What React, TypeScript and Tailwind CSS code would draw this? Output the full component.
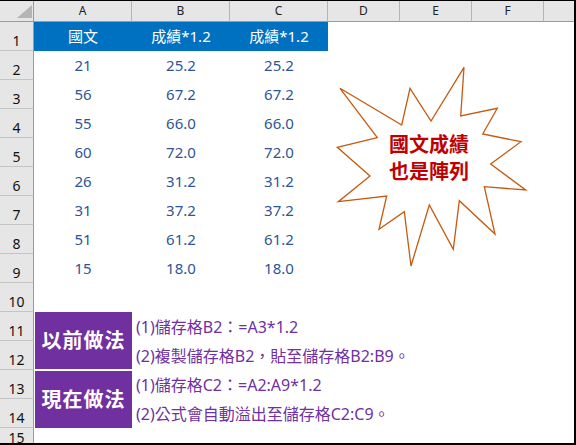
import React from "react";

const FONT = { fontFamily: '"Noto Sans", "Noto Sans CJK TC", sans-serif' };

const data = [
  ["21", "25.2", "25.2"],
  ["56", "67.2", "67.2"],
  ["55", "66.0", "66.0"],
  ["60", "72.0", "72.0"],
  ["26", "31.2", "31.2"],
  ["31", "37.2", "37.2"],
  ["51", "61.2", "61.2"],
  ["15", "18.0", "18.0"],
];

function RowNum({ n }: { n: number | string }) {
  return (
    <div className="flex items-end justify-center bg-[#e6e6e6] border-r border-b border-r-[#9b9b9b] border-b-[#c4c4c4] text-[14px] leading-[19px] text-[#111]">
      {n}
    </div>
  );
}

function ColHead({ l, last }: { l: string; last?: boolean }) {
  return (
    <div
      className={
        last
          ? "flex items-center justify-center bg-[#e6e6e6] border-b border-b-[#9b9b9b] text-[12px] text-[#222]"
          : "flex items-center justify-center bg-[#e6e6e6] border-b border-r border-b-[#9b9b9b] border-r-[#b4b4b4] text-[12px] text-[#222]"
      }
    >
      {l}
    </div>
  );
}

const starPts: [number, number][] = [
  [340, 88.3],
  [401.7, 125],
  [410, 88.3],
  [431, 121],
  [464, 67.3],
  [460.7, 116],
  [497.3, 108.3],
  [482.7, 134],
  [521, 141.7],
  [490.7, 164],
  [525.7, 190],
  [484.3, 186.7],
  [495, 234],
  [459.3, 200.7],
  [453.3, 249.3],
  [429.3, 205],
  [411, 266],
  [404.3, 211.7],
  [379, 229.3],
  [386.7, 196],
  [338.3, 201.7],
  [370, 176],
  [337.3, 147.3],
  [377.3, 137.7],
];

export default function App() {
  const pts = starPts.map(([x, y]) => `${x},${y - 1}`).join(" ");
  return (
    <div
      className="relative w-[576px] h-[445px] overflow-hidden bg-white border-t border-r-2 border-b-2 border-black box-border"
      style={FONT}
    >
      <div className="grid h-full grid-cols-[34px_98px_98px_98px_72px_72px_72px_1fr] grid-rows-[21px_repeat(14,29px)_1fr]">
        {/* header row */}
        <div className="relative bg-[#e6e6e6] border-r border-b border-r-[#9b9b9b] border-b-[#9b9b9b]">
          <svg className="absolute left-0 top-0" width="34" height="21">
            <polygon points="17,17 32,17 32,4" fill="#b4b4b4" />
          </svg>
        </div>
        <ColHead l="A" />
        <ColHead l="B" />
        <ColHead l="C" />
        <ColHead l="D" />
        <ColHead l="E" />
        <ColHead l="F" />
        <ColHead l="" last />

        {/* row 1 */}
        <RowNum n={1} />
        <div className="flex items-center justify-center bg-[#0070c0] text-white text-[15px]">國文</div>
        <div className="flex items-center justify-center bg-[#0070c0] text-white text-[15px]">成績*1.2</div>
        <div className="flex items-center justify-center bg-[#0070c0] text-white text-[15px]">成績*1.2</div>
        <div />
        <div />
        <div />
        <div />

        {data.map((r, i) => (
          <React.Fragment key={i}>
            <RowNum n={i + 2} />
            {r.map((v, j) => (
              <div key={j} className="flex items-center justify-center text-[15px] text-[#2f5597]">
                {v}
              </div>
            ))}
            <div />
            <div />
            <div />
            <div />
          </React.Fragment>
        ))}

        {/* row 10 */}
        <RowNum n={10} />
        <div className="col-span-7" />

        {/* row 11 */}
        <RowNum n={11} />
        <div className="row-span-2 flex items-center justify-center bg-[#7030a0] text-white text-[20px] font-bold tracking-[1px] ml-[1px] border-b border-white">
          以前做法
        </div>
        <div className="col-start-3 col-span-6 flex items-center whitespace-nowrap pl-[4px] text-[16px] text-[#7030a0]">
          (1)儲存格B2：=A3*1.2
        </div>

        {/* row 12 */}
        <RowNum n={12} />
        <div className="col-start-3 col-span-6 flex items-center whitespace-nowrap pl-[4px] text-[16px] text-[#7030a0]">
          (2)複製儲存格B2，貼至儲存格B2:B9。
        </div>

        {/* row 13 */}
        <RowNum n={13} />
        <div className="row-span-2 flex items-center justify-center bg-[#7030a0] text-white text-[20px] font-bold tracking-[1px] ml-[1px] border-t border-white">
          現在做法
        </div>
        <div className="col-start-3 col-span-6 flex items-center whitespace-nowrap pl-[4px] text-[16px] text-[#7030a0]">
          (1)儲存格C2：=A2:A9*1.2
        </div>

        {/* row 14 */}
        <RowNum n={14} />
        <div className="col-start-3 col-span-6 flex items-center whitespace-nowrap pl-[4px] text-[16px] text-[#7030a0]">
          (2)公式會自動溢出至儲存格C2:C9。
        </div>

        {/* row 15 */}
        <RowNum n={15} />
        <div className="col-span-7" />
      </div>

      {/* explosion shape */}
      <svg className="absolute left-0 top-0 pointer-events-none" width="576" height="445">
        <polygon points={pts} fill="white" stroke="#c55a11" strokeWidth="1.3" strokeLinejoin="miter" />
      </svg>
      <div className="absolute left-[379px] top-[130px] w-[100px] flex flex-col items-center text-[20px] font-bold leading-[27px] text-[#c00000]">
        <span>國文成績</span>
        <span>也是陣列</span>
      </div>
    </div>
  );
}
